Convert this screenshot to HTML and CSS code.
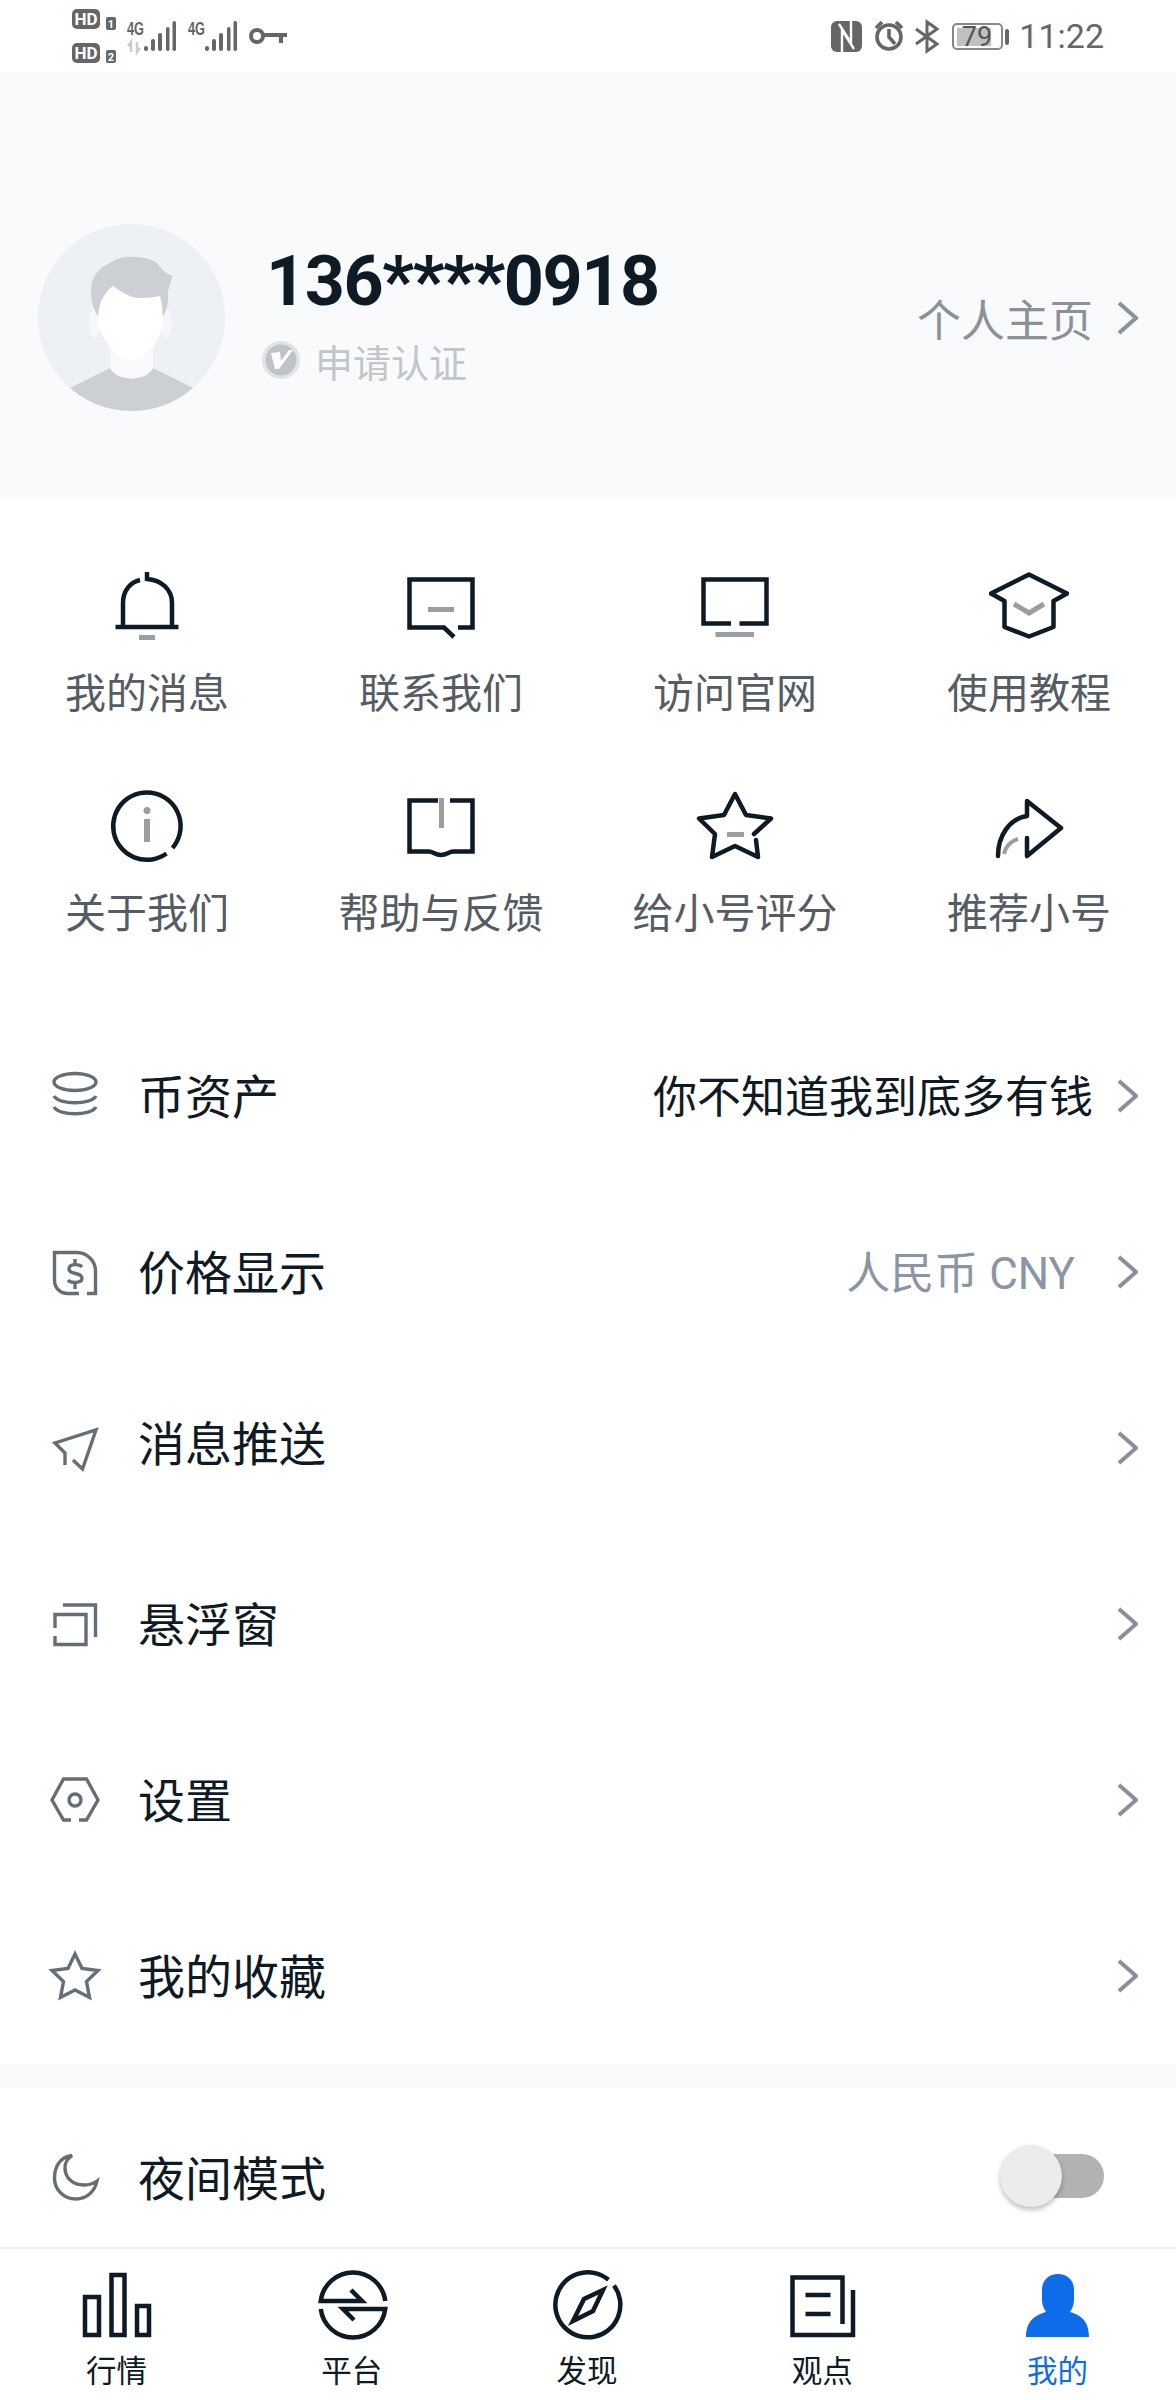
FILE: index.html
```html
<!DOCTYPE html>
<html lang="zh-CN">
<head>
<meta charset="utf-8">
<title>我的</title>
<link rel="stylesheet" href="styles.css">
</head>
<body>
<div class="page">
  <div class="status">
    <svg class="st-left" width="300" height="72" viewBox="0 0 300 72">
      <rect class="st-fill" x="72" y="9" width="28" height="20" rx="5"/>
      <text class="st-hd" x="86" y="25">HD</text>
      <rect class="st-fill" x="106" y="17" width="10" height="13" rx="2"/>
      <text class="st-n" x="111" y="28">1</text>
      <rect class="st-fill" x="72" y="43" width="28" height="20" rx="5"/>
      <text class="st-hd" x="86" y="59">HD</text>
      <rect class="st-fill" x="106" y="50" width="10" height="13" rx="2"/>
      <text class="st-n" x="111" y="61">2</text>
      <text class="st-4g" x="127" y="35" textLength="17" lengthAdjust="spacingAndGlyphs">4G</text>
      <path class="st-arrows" d="M131 52V42L128 46M137 42V52L140 48"/>
      <g class="st-fill">
        <rect x="144" y="46" width="4" height="5" rx="2"/><rect x="151" y="39" width="4" height="12" rx="2"/><rect x="158" y="33" width="4" height="18" rx="2"/><rect x="166" y="27" width="3.5" height="24" rx="1.7"/><rect x="172.500" y="21" width="3.5" height="30" rx="1.7"/>
      </g>
      <text class="st-4g" x="188" y="35" textLength="17" lengthAdjust="spacingAndGlyphs">4G</text>
      <g class="st-fill">
        <rect x="205" y="46" width="4" height="5" rx="2"/><rect x="212" y="39" width="4" height="12" rx="2"/><rect x="219" y="33" width="4" height="18" rx="2"/><rect x="227" y="27" width="3.5" height="24" rx="1.7"/><rect x="233.500" y="21" width="3.5" height="30" rx="1.7"/>
      </g>
      <circle class="st-line" cx="257" cy="36" r="6"/>
      <path class="st-line" d="M263 35H287M281 35V43"/>
    </svg>
    <div class="st-right">
      <svg width="182" height="72" viewBox="832 0 182 72">
        <rect class="st-fill" x="833" y="21" width="31" height="31" rx="6"/>
        <path class="st-nfc" d="M844 53V30L856 49M853 20V43L841 24"/>
        <circle class="st-alarm" cx="891" cy="37" r="12"/>
        <path class="st-alarm" d="M878 28L884 22M904 28L898 22M891 29V37L897 44"/>
        <path class="st-line3" d="M918 29L939 44 929 51V22L939 29 918 44"/>
        <rect class="st-batt" x="955" y="24" width="49" height="25" rx="4"/>
        <rect class="st-level" x="959" y="28" width="34" height="18"/>
        <text class="st-pct" x="979" y="46">79</text>
        <rect class="st-fill" x="1007" y="29" width="4" height="16" rx="2"/>
      </svg>
      <span class="st-time">11:22</span>
    </div>
  </div>

  <header class="profile">
    <svg class="avatar" width="187" height="187" viewBox="0 0 187 187">
      <defs><clipPath id="avatar-clip"><circle cx="93.500" cy="93.500" r="93.500"/></clipPath></defs>
      <circle cx="93.500" cy="93.500" r="93.500" fill="#edf0f5"/>
      <g clip-path="url(#avatar-clip)">
        <path fill="#ccd0d5" d="M20 172L32 164L72 144C80 158 107 158 115 144L155 164L167 172V187H20Z"/>
        <path fill="#f8f9fb" d="M72 118H115V144C107 158 80 158 72 144Z"/>
        <ellipse cx="57" cy="99" rx="6" ry="15" fill="#f6f7f9"/>
        <ellipse cx="128.500" cy="99" rx="5.500" ry="15" fill="#f6f7f9"/>
        <path fill="#ccd0d5" d="M60 92C54 84 53 74 53 66C53 52 62 43 72 39C80 33 90 32 95 33C105 33 113 35 119 39C123 44 127 50 134.500 52L130 67C130 75 131 84 125 92Z"/>
        <path fill="#fff" d="M75 62C84 68 92 74 102 74C109 74 116 73 122 72C124 80 125 90 125 100C123 112 116 122 108 130C100 138 87 138 79 130C71 122 63 112 60 100C60 90 61 85 62 80C65 72 70 66 75 62Z"/>
      </g>
    </svg>
    <div class="who">
      <div class="name">136****0918</div>
      <div class="verify">
        <svg width="38" height="38" viewBox="0 0 38 38">
          <circle cx="19" cy="19" r="19" fill="#dfe2e6"/>
          <circle cx="19" cy="19" r="15.500" fill="#bfc3c8"/>
          <path fill="#fff" d="M9 12L18 11L19 20L27 9H31L17 28H13Z"/>
        </svg>
        <span>申请认证</span>
      </div>
    </div>
    <div class="home-link">
      <span>个人主页</span>
      <svg class="chev" width="24" height="36" viewBox="0 0 24 36"><path d="M5 3L22 18 5 33"/></svg>
    </div>
  </header>

  <section class="shortcuts">
    <div class="cell">
      <svg class="s-ic" width="80" height="80" viewBox="0 0 80 80">
        <path class="d" d="M16 57V35C16 22 24 14 33 12M40 4V11C54 12 65 21 65 35V57M8.500 59H71.500"/>
        <rect class="g" x="32" y="67" width="16" height="5"/>
      </svg>
      <span>我的消息</span>
    </div>
    <div class="cell">
      <svg class="s-ic" width="80" height="80" viewBox="0 0 80 80">
        <path class="d" d="M57 59.500H71.500V11.500H8.500V59.500H43L53 69"/>
        <rect class="g" x="27" y="39" width="26" height="5"/>
      </svg>
      <span>联系我们</span>
    </div>
    <div class="cell">
      <svg class="s-ic" width="80" height="80" viewBox="0 0 80 80">
        <path class="d" d="M36 55.500H8.500V11.500H71.500V55.500H44.500"/>
        <rect class="g" x="20.500" y="64" width="38.500" height="5"/>
      </svg>
      <span>访问官网</span>
    </div>
    <div class="cell">
      <svg class="s-ic" width="80" height="80" viewBox="0 0 80 80">
        <path class="d rj" d="M40 6.500L78 25.500 64.500 33V59L40 68.500 15.500 59V33L2 25.500Z"/>
        <path class="gl" d="M25 36L40 45 55 36"/>
      </svg>
      <span>使用教程</span>
    </div>
    <div class="cell">
      <svg class="s-ic" width="80" height="80" viewBox="0 0 80 80">
        <path class="d" d="M65.500 60A33.700 33.700 0 1 0 59.500 65.500"/>
        <circle class="g" cx="40" cy="22.500" r="3.500"/>
        <rect class="g" x="37" y="31" width="6" height="23"/>
      </svg>
      <span>关于我们</span>
    </div>
    <div class="cell">
      <svg class="s-ic" width="80" height="80" viewBox="0 0 80 80">
        <path class="d" d="M37 12.500H8.500V63.500H28C32 63.500 34 67 40 67S48 63.500 52 63.500H71.500V12.500H49"/>
        <rect class="g" x="38" y="10" width="5" height="30"/>
      </svg>
      <span>帮助与反馈</span>
    </div>
    <div class="cell">
      <svg class="s-ic" width="80" height="80" viewBox="0 0 80 80">
        <path class="d rj" d="M59 46L76 30.500 51 27 40 6 29 27 4 30.500 20 46 17 69 40 58 63 69 61 52"/>
        <rect class="g" x="32" y="44" width="17" height="5"/>
      </svg>
      <span>给小号评分</span>
    </div>
    <div class="cell">
      <svg class="s-ic" width="80" height="80" viewBox="0 0 80 80">
        <path class="d rj" d="M9 68C9 48 20 31 38 28V13L72 40 38 68V50"/>
        <path class="gt" d="M15 66C17 58 22 53 29 51"/>
      </svg>
      <span>推荐小号</span>
    </div>
  </section>

  <ul class="list">
    <li class="row">
      <svg class="r-ic" width="48" height="48" viewBox="0 0 48 48"><ellipse cx="24" cy="10" rx="21" ry="8.500"/><path d="M3 24C8 33 40 33 45 24M3 35C8 44 40 44 45 35"/></svg>
      <span class="r-label">币资产</span>
      <span class="r-value">你不知道我到底多有钱</span>
      <svg class="chev" width="24" height="36" viewBox="0 0 24 36"><path d="M5 3L22 18 5 33"/></svg>
    </li>
    <li class="row">
      <svg class="r-ic" width="48" height="48" viewBox="0 0 48 48"><path d="M36 45.500H44.500V23C44.500 13 36 4.500 26 4.500H3.500V32C3.500 40 9 45.500 17 45.500H28"/><path d="M31 19C29 16 18 15 18 21C18 27 31 24 31 30C31 36 19 35 17 32M24 11V16M24 35V41"/></svg>
      <span class="r-label">价格显示</span>
      <span class="r-value muted">人民币 CNY</span>
      <svg class="chev" width="24" height="36" viewBox="0 0 24 36"><path d="M5 3L22 18 5 33"/></svg>
    </li>
    <li class="row">
      <svg class="r-ic" width="48" height="48" viewBox="0 0 48 48"><path d="M14 41V29L4 19 45 6 31.500 45 22 36"/></svg>
      <span class="r-label lifted">消息推送</span>
      <svg class="chev" width="24" height="36" viewBox="0 0 24 36"><path d="M5 3L22 18 5 33"/></svg>
    </li>
    <li class="row">
      <svg class="r-ic" width="48" height="48" viewBox="0 0 48 48"><path d="M12 5H44.500V37M4 28V14.500H35V44.500H4V36"/></svg>
      <span class="r-label">悬浮窗</span>
      <svg class="chev" width="24" height="36" viewBox="0 0 24 36"><path d="M5 3L22 18 5 33"/></svg>
    </li>
    <li class="row">
      <svg class="r-ic" width="48" height="48" viewBox="0 0 48 48"><path d="M20 44H12.500L1 24 12.500 3H35.500L47 24 35.500 44H28"/><circle cx="24" cy="24" r="6"/></svg>
      <span class="r-label">设置</span>
      <svg class="chev" width="24" height="36" viewBox="0 0 24 36"><path d="M5 3L22 18 5 33"/></svg>
    </li>
    <li class="row">
      <svg class="r-ic" width="48" height="48" viewBox="0 0 48 48"><path d="M24 2L31 16.500 47 18.500 35.500 29.500 38.500 45.500 24 38 9.500 45.500 12.500 29.500 1 18.500 17 16.500Z"/></svg>
      <span class="r-label">我的收藏</span>
      <svg class="chev" width="24" height="36" viewBox="0 0 24 36"><path d="M5 3L22 18 5 33"/></svg>
    </li>
  </ul>

  <div class="band"></div>

  <div class="night">
    <svg class="r-ic" width="48" height="48" viewBox="0 0 48 48"><path d="M21 1.500C8 3 3.500 14 3.500 24C3.500 36 13 45 25 45C36 45 44 37 46 27C42 30 37 31 33 31C22 31 14 24 14 14C14 8 16 5 21 1.500Z"/></svg>
    <span class="r-label">夜间模式</span>
    <div class="toggle"><div class="thumb"></div></div>
  </div>

  <nav class="tabs">
    <div class="tab">
      <svg class="t-ic" width="80" height="80" viewBox="0 0 80 80"><path d="M7 29H21V67H7ZM33.500 7H46.500V67H33.500ZM59 38H71V67H59Z"/></svg>
      <span>行情</span>
    </div>
    <div class="tab">
      <svg class="t-ic" width="80" height="80" viewBox="0 0 80 80"><path d="M72.250 33A32.500 32.500 0 0 0 7.750 33H49L38 22M7.750 41A32.500 32.500 0 0 0 72.250 41H30L41 52"/></svg>
      <span>平台</span>
    </div>
    <div class="tab">
      <svg class="t-ic" width="80" height="80" viewBox="0 0 80 80"><path d="M66 17.500A32.500 32.500 0 1 1 60.500 11.700"/><path d="M55 22L36 31 25 53 45 43Z"/></svg>
      <span>发现</span>
    </div>
    <div class="tab">
      <svg class="t-ic" width="80" height="80" viewBox="0 0 80 80"><path d="M59.500 56V9.500H9.500V67H70V22M22.500 27H47.500M22.500 46H47.500"/></svg>
      <span>观点</span>
    </div>
    <div class="tab active">
      <svg width="80" height="80" viewBox="0 0 80 80"><path class="person" d="M40 6C31 6 24 12 24 22V32C24 37 26 41 28 44C18 47 8 52 8 69H71C71 52 62 47 52 44C54 41 56 37 56 32V22C56 12 49 6 40 6Z"/></svg>
      <span>我的</span>
    </div>
  </nav>
</div>
</body>
</html>
```
FILE: styles.css
```css
* { box-sizing: border-box; }
html, body { margin: 0; padding: 0; background: #fff; }
body {
  font-family: Roboto, "Noto Sans CJK SC", sans-serif;
  color: #0e1a24;
}
svg { display: block; flex: none; }
.page { width: 1176px; height: 2400px; overflow: hidden; background: #fff; }

/* status bar */
.status { height: 72px; display: flex; justify-content: space-between; background: #fff; }
.st-right { display: flex; align-items: center; gap: 7px; padding-right: 72px; }
.st-time { font-size: 34px; color: #666; line-height: 72px; }
.st-fill { fill: #666; }
.st-hd { fill: #fff; font: 700 17px Roboto, sans-serif; text-anchor: middle; }
.st-n { fill: #fff; font: 700 11px Roboto, sans-serif; text-anchor: middle; }
.st-4g { fill: #666; font: 700 18px "Liberation Sans", sans-serif; }
.st-arrows { fill: none; stroke: #ccc; stroke-width: 2.5; }
.st-line { fill: none; stroke: #666; stroke-width: 4; }
.st-line3 { fill: none; stroke: #666; stroke-width: 3; }
.st-alarm { fill: none; stroke: #666; stroke-width: 3.6; }
.st-nfc { fill: none; stroke: #fff; stroke-width: 2.4; }
.st-batt { fill: none; stroke: #888; stroke-width: 2; }
.st-level { fill: #c0c0c0; }
.st-pct { fill: #555; font: 400 27px Roboto, sans-serif; text-anchor: middle; }

/* profile header */
.profile {
  height: 427px;
  padding: 64px 38px 0;
  display: flex;
  align-items: center;
  background: #f9fafc;
}
.who { margin-left: 41px; padding-bottom: 10px; }
.name { font-size: 70px; font-weight: 700; line-height: 80px; letter-spacing: -1.4px; color: #0e1a24; }
.verify { display: flex; align-items: center; gap: 15px; margin-top: 15px; height: 48px; margin-left: -4px; font-size: 38px; color: #c2c5c9; }
.home-link { margin-left: auto; display: flex; align-items: center; gap: 21px; font-size: 44px; color: #8a9199; }
.chev path { fill: none; stroke: #8a9199; stroke-width: 4; }

/* shortcuts grid */
.shortcuts {
  display: grid;
  grid-template-columns: repeat(4, 294px);
  row-gap: 70px;
  padding: 69px 0 70px;
}
.cell {
  display: flex;
  flex-direction: column;
  align-items: center;
  gap: 22px;
  font-size: 41px;
  line-height: 48px;
  color: #555c64;
}
.s-ic .d { fill: none; stroke: #0e1a24; stroke-width: 4.5; }
.s-ic .rj { stroke-linejoin: round; stroke-linecap: round; }
.s-ic .g { fill: #9a9da2; }
.s-ic .gl { fill: none; stroke: #9a9da2; stroke-width: 5; }
.s-ic .gt { fill: none; stroke: #9a9da2; stroke-width: 4; }

/* rows */
.list { list-style: none; margin: 0; padding: 0; }
.row { height: 176px; padding: 0 38px 0 51px; display: flex; align-items: center; }
.r-ic { overflow: visible; }
.r-ic path, .r-ic ellipse, .r-ic circle { fill: none; stroke: #666e75; stroke-width: 3.4; }
.r-label { margin-left: 39px; padding-top: 3px; font-size: 47px; line-height: 56px; color: #0e1a24; }
.r-label.lifted { padding-top: 0; margin-bottom: 6px; }
.r-value { margin-left: auto; margin-right: 21px; padding-top: 3px; font-size: 44px; line-height: 56px; color: #0e1a24; }
.r-value.muted { color: #8a96a3; margin-right: 39px; }
.r-label + .chev { margin-left: auto; }

.band { height: 24px; background: #f9fafc; }

.night { height: 159px; padding: 21px 72px 0 51px; display: flex; align-items: center; }
.toggle { position: relative; margin-left: auto; margin-bottom: 4px; width: 80px; height: 44px; border-radius: 22px; background: #b2b2b2; }
.thumb { position: absolute; left: -24px; top: -9px; width: 62px; height: 62px; border-radius: 50%; background: #ececec; box-shadow: 0 3px 5px rgba(0, 0, 0, .25); }

/* bottom tabs */
.tabs { height: 153px; border-top: 2px solid #eef0f3; padding-top: 19px; display: flex; }
.tab { flex: 1; display: flex; flex-direction: column; align-items: center; gap: 4px; font-size: 30.5px; line-height: 40px; color: #0e1a24; }
.tab span { padding-right: 2px; }
.tab.active { color: #0d6de8; }
.t-ic path { fill: none; stroke: #0e1a24; stroke-width: 4.5; }
.person { fill: #0d6de8; }
```
